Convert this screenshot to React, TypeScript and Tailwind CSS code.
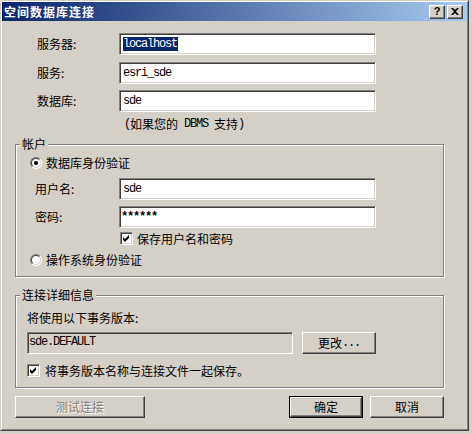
import React from "react";

const raised =
  "bg-[#d4d0c8] border border-t-white border-l-white border-r-[#404040] border-b-[#404040] shadow-[inset_-1px_-1px_0_#808080,inset_1px_1px_0_#d4d0c8]";
const sunken =
  "border border-t-[#808080] border-l-[#808080] border-r-white border-b-white shadow-[inset_1px_1px_0_#404040,inset_-1px_-1px_0_#d4d0c8]";
const mono = "font-['Liberation_Mono',monospace] text-[12px] tracking-[-1.2px]";

function Input({ children, bg = "bg-white", w = "w-[257px]" }: { children?: React.ReactNode; bg?: string; w?: string }) {
  return (
    <div className={`${w} h-[22px] ${bg} ${sunken} flex items-center pl-[3px] leading-[12px]`}>
      {children}
    </div>
  );
}

function Radio({ checked }: { checked?: boolean }) {
  return (
    <div className="w-[12px] h-[12px] rounded-full border border-t-[#808080] border-l-[#808080] border-r-white border-b-white shrink-0">
      <div className="w-[10px] h-[10px] rounded-full border border-t-[#404040] border-l-[#404040] border-r-[#d4d0c8] border-b-[#d4d0c8] bg-white flex items-center justify-center">
        {checked && <div className="w-[4px] h-[4px] rounded-full bg-black" />}
      </div>
    </div>
  );
}

function Check() {
  return (
    <div className={`w-[13px] h-[13px] bg-white ${sunken} shrink-0 flex items-center justify-center`}>
      <svg width="11" height="11" viewBox="0 0 11 11">
        <polygon points="2,4 4,6 8,2 8,5 4,9 2,7" fill="#000" />
      </svg>
    </div>
  );
}

export default function App() {
  return (
    <div className="w-[472px] h-[434px] bg-[#d4d0c8] font-['Noto_Sans_CJK_SC',sans-serif] text-[12px] leading-[12px] text-black">
      <div className="w-[469px] h-[431px] border border-t-[#d4d0c8] border-l-[#d4d0c8] border-r-[#404040] border-b-[#404040] flex flex-col">
        <div className="flex-1 border border-t-white border-l-white border-r-[#808080] border-b-[#808080] flex flex-col">
          {/* Title bar */}
          <div className="h-[19px] flex items-center justify-between bg-[linear-gradient(to_right,#0a246a,#a6caf0)] shrink-0">
            <span className="pl-[2px] text-white font-bold tracking-[1px]">空间数据库连接</span>
            <div className="flex gap-[2px] pr-[4px]">
              <div className={`w-[16px] h-[14px] ${raised} flex items-center justify-center`}>
                <span className="font-['Liberation_Sans',sans-serif] font-bold text-[11px] leading-[11px]">?</span>
              </div>
              <div className={`w-[16px] h-[14px] ${raised} flex items-center justify-center`}>
                <svg width="8" height="7" viewBox="0 0 8 7">
                  <path d="M0 0 L2 0 L4 2 L6 0 L8 0 L5 3.5 L8 7 L6 7 L4 5 L2 7 L0 7 L3 3.5 Z" fill="#000" />
                </svg>
              </div>
            </div>
          </div>

          {/* Body */}
          <div className="flex flex-col">
            <div className="mt-[12px] flex items-center h-[22px]">
              <span className="ml-[35px] w-[82px]">服务器:</span>
              <Input>
                <span className={`${mono} inline-block h-[14px] leading-[14px] bg-[#0a246a] text-white pr-[1px]`}>localhost</span>
              </Input>
            </div>
            <div className="mt-[7px] flex items-center h-[22px]">
              <span className="ml-[35px] w-[82px]">服务:</span>
              <Input>
                <span className={mono}>esri_sde</span>
              </Input>
            </div>
            <div className="mt-[6px] flex items-center h-[22px]">
              <span className="ml-[35px] w-[82px]">数据库:</span>
              <Input>
                <span className={mono}>sde</span>
              </Input>
            </div>
            <div className="mt-[6px] ml-[122px] h-[12px] flex items-center">
              <span className={mono}>(</span>
              <span>如果您的</span>
              <span className={`${mono} whitespace-pre`}> DBMS </span>
              <span>支持</span>
              <span className={mono}>)</span>
            </div>

            {/* Group 1 */}
            <fieldset className="mt-[8px] ml-[13px] w-[429px] border border-[#808080] shadow-[1px_1px_0_#fff,inset_1px_1px_0_#fff] pb-[10px]">
              <legend className="ml-[4px] px-[2px] leading-[12px] bg-[#d4d0c8]">帐户</legend>
              <div className="mt-[7px] pl-[14px] h-[12px] flex items-center gap-[4px]">
                <Radio checked />
                <span>数据库身份验证</span>
              </div>
              <div className="mt-[9px] flex items-center h-[22px]">
                <span className="ml-[19px] w-[84px]">用户名:</span>
                <Input>
                  <span className={mono}>sde</span>
                </Input>
              </div>
              <div className="mt-[6px] flex items-center h-[22px]">
                <span className="ml-[19px] w-[84px]">密码:</span>
                <Input>
                  <span className={`${mono} -ml-[2px] font-bold`}>******</span>
                </Input>
              </div>
              <div className="mt-[4px] pl-[104px] h-[13px] flex items-center gap-[4px]">
                <Check />
                <span>保存用户名和密码</span>
              </div>
              <div className="mt-[9px] pl-[14px] h-[12px] flex items-center gap-[4px]">
                <Radio />
                <span>操作系统身份验证</span>
              </div>
            </fieldset>

            {/* Group 2 */}
            <fieldset className="mt-[12px] ml-[13px] w-[429px] border border-[#808080] shadow-[1px_1px_0_#fff,inset_1px_1px_0_#fff] pb-[10px]">
              <legend className="ml-[4px] px-[2px] leading-[12px] bg-[#d4d0c8]">连接详细信息</legend>
              <div className="mt-[11px] pl-[11px] h-[12px] flex items-center">将使用以下事务版本:</div>
              <div className="mt-[8px] pl-[11px] flex items-center gap-[9px]">
                <div className={`w-[266px] h-[22px] bg-[#d4d0c8] ${sunken} flex items-center pl-[1px] pb-[3px]`}>
                  <span className={mono}>sde.DEFAULT</span>
                </div>
                <div className={`w-[74px] h-[22px] ${raised} flex items-center justify-center`}>
                  更改<span className={mono}>...</span>
                </div>
              </div>
              <div className="mt-[10px] pl-[11px] h-[13px] flex items-center gap-[5px]">
                <Check />
                <span>将事务版本名称与连接文件一起保存。</span>
              </div>
            </fieldset>

            {/* Bottom buttons */}
            <div className="mt-[8px] flex items-center pr-[23px]">
              <div className={`ml-[13px] w-[130px] h-[22px] ${raised} flex items-center justify-center text-[#808080] [text-shadow:1px_1px_0_#fff]`}>
                测试连接
              </div>
              <div className="ml-auto w-[74px] h-[22px] border border-black">
                <div className={`w-full h-full ${raised} flex items-center justify-center`}>确定</div>
              </div>
              <div className={`ml-[7px] w-[74px] h-[22px] ${raised} flex items-center justify-center`}>取消</div>
            </div>
          </div>
        </div>
      </div>
    </div>
  );
}
